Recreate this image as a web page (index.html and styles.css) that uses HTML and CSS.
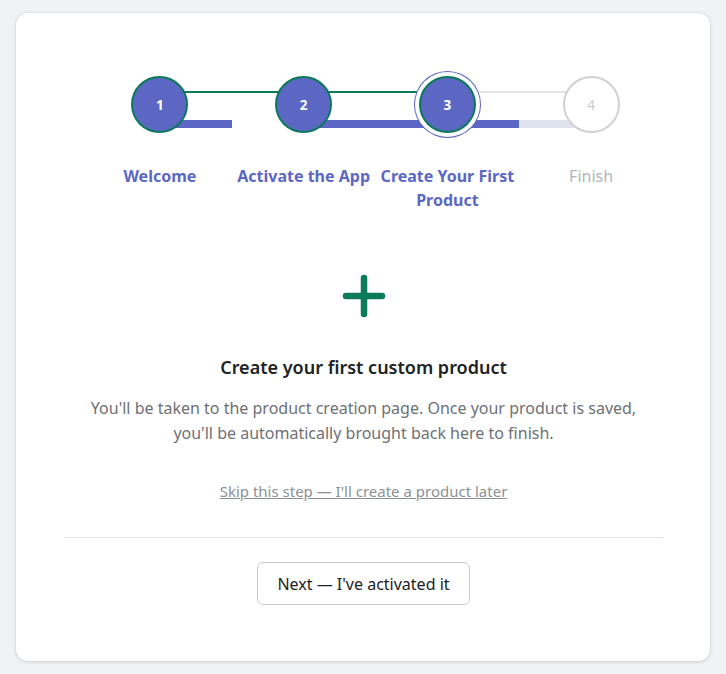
FILE: index.html
```html
<!DOCTYPE html>
<html lang="en">
<head>
<meta charset="utf-8">
<title>Onboarding</title>
<link rel="stylesheet" href="styles.css">
</head>
<body>
<main class="card">
  <ol class="stepper">
    <li class="step step-done step-1">
      <span class="dot">1</span>
      <span class="label">Welcome</span>
    </li>
    <li class="step step-done step-2">
      <span class="dot">2</span>
      <span class="label">Activate the App</span>
    </li>
    <li class="step step-current step-3">
      <span class="dot">3</span>
      <span class="label">Create Your First Product</span>
    </li>
    <li class="step step-todo step-4">
      <span class="dot">4</span>
      <span class="label">Finish</span>
    </li>
  </ol>

  <section class="content">
    <svg class="plus" viewBox="0 0 48 48" width="48" height="48" aria-hidden="true">
      <path d="M24 6V42M6 24H42" fill="none" stroke="#0b7a5b" stroke-width="6.5" stroke-linecap="round"/>
    </svg>
    <h2 class="title">Create your first custom product</h2>
    <p class="desc">You'll be taken to the product creation page. Once your product is saved, you'll be automatically brought back here to finish.</p>
    <a class="skip" href="#">Skip this step — I'll create a product later</a>
  </section>

  <hr class="divider">

  <div class="actions">
    <button class="btn" type="button">Next — I've activated it</button>
  </div>
</main>
</body>
</html>
```

FILE: styles.css
```css
* { box-sizing: border-box; }

html, body {
  margin: 0;
  padding: 0;
  background: #f1f2f4;
}

body {
  padding: 13px 16px;
  font-family: "Noto Sans", "Open Sans", sans-serif;
  color: #202223;
}

.card {
  background: #ffffff;
  border-radius: 12px;
  box-shadow: 0 1px 4px rgba(0, 0, 0, 0.12), 0 0 0 1px rgba(0, 0, 0, 0.03);
  padding: 63px 47px 57px 48px;
  height: 648px;
}

/* Stepper */
.stepper {
  list-style: none;
  margin: 0;
  padding: 0 0 0 24px;
  display: grid;
  grid-template-columns: repeat(4, 1fr);
}

.step {
  position: relative;
  display: flex;
  flex-direction: column;
  align-items: center;
  text-align: center;
}

.step::before,
.step::after {
  content: "";
  position: absolute;
  z-index: 0;
}

/* thin connector line */
.step-1::before,
.step-2::before {
  top: 15px;
  left: 50%;
  width: 100%;
  height: 2px;
  background: #0b7a5b;
}
.step-3::before {
  top: 15px;
  left: 50%;
  width: 100%;
  height: 2px;
  background: #e3e4e7;
}

/* progress bar */
.step-1::after,
.step-2::after {
  top: 44px;
  left: 50%;
  width: 50%;
  height: 8px;
  background: #5c67c3;
}
.step-3::after {
  top: 44px;
  left: 0;
  width: 100%;
  height: 8px;
  background: #5c67c3;
}
.step-4::after {
  top: 44px;
  left: 0;
  width: 50%;
  height: 8px;
  background: #dfe3ee;
}

.dot {
  position: relative;
  z-index: 1;
  width: 57px;
  height: 57px;
  border-radius: 50%;
  display: flex;
  align-items: center;
  justify-content: center;
  font-size: 13.5px;
  font-weight: 700;
  color: #ffffff;
  background: #5c67c3;
  border: 2px solid #0b7a5b;
}

.step-current .dot {
  box-shadow: 0 0 0 4px #ffffff, 0 0 0 5px #5c67c3;
}

.step-todo .dot {
  background: #ffffff;
  border-color: #cfd1d4;
  color: #c6cacf;
  font-weight: 400;
}

.label {
  margin-top: 31px;
  font-size: 16px;
  line-height: 24px;
  font-weight: 700;
  color: #5c67c3;
  padding: 0 2px;
}

.step-todo .label {
  font-weight: 400;
  color: #b1b6bd;
}

/* Content */
.content {
  display: flex;
  flex-direction: column;
  align-items: center;
  text-align: center;
  padding-top: 60px;
}

.plus {
  display: block;
}

.title {
  margin: 35px 0 0;
  font-size: 18px;
  line-height: 24px;
  font-weight: 600;
  color: #202223;
}

.desc {
  margin: 17px 0 0;
  max-width: 560px;
  font-size: 16px;
  line-height: 25px;
  color: #6d7175;
}

.skip {
  margin-top: 33px;
  font-size: 15px;
  line-height: 24px;
  color: #8c9196;
  text-decoration: underline;
}

.divider {
  margin: 34px 0 0;
  border: 0;
  border-top: 1px solid #e1e3e5;
}

.actions {
  display: flex;
  justify-content: center;
  padding-top: 24px;
}

.btn {
  font-family: inherit;
  font-size: 16px;
  color: #202223;
  background: #ffffff;
  border: 1px solid #c9cccf;
  border-radius: 6px;
  height: 43px;
  padding: 0 19px;
  cursor: pointer;
}
```
